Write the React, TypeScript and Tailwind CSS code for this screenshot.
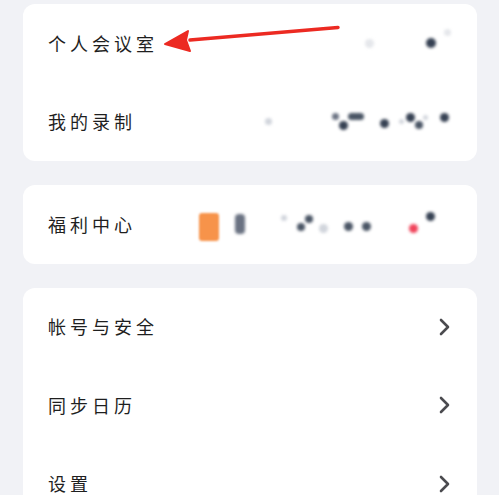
import React from "react";

const font = { fontFamily: '"Noto Sans CJK SC", "Noto Sans", sans-serif' };

function Chevron() {
  return (
    <svg width="14" height="20" viewBox="0 0 14 20" className="shrink-0 -mr-[2px]">
      <polyline points="4,3 11,10 4,17" fill="none" stroke="#4b4b4f" strokeWidth="2.6" strokeLinecap="round" strokeLinejoin="round" />
    </svg>
  );
}

// blurred dot used for the pixelated/obscured values on the right
function Dot({ c = "bg-gray-700", s = "w-[9px] h-[9px]", cls = "" }: { c?: string; s?: string; cls?: string }) {
  return <span className={`inline-block rounded-full blur-[1.5px] ${c} ${s} ${cls}`} />;
}

function Row({ label, right }: { label: string; right?: React.ReactNode }) {
  return (
    <div className="h-[78.5px] flex items-center pl-[25px] pr-[28px]">
      <span className="text-[18px] tracking-[4px] text-[#1f1f1f]" style={font}>
        {label}
      </span>
      <div className="flex-1 flex items-center justify-end">{right}</div>
    </div>
  );
}

export default function App() {
  return (
    <div className="relative w-[499px] h-[495px] overflow-hidden bg-[#f1f2f6] pt-[4px] px-[23px] pr-[22px] flex flex-col gap-[24px]">
      <div className="bg-white rounded-[12px]">
        <Row
          label="个人会议室"
          right={
            <div className="flex items-center">
              <Dot c="bg-gray-200" s="w-[9px] h-[9px]" cls="mr-[52px]" />
              <Dot s="w-[10px] h-[10px]" cls="mr-[8px]" />
              <Dot c="bg-gray-200" s="w-[7px] h-[7px]" cls="-mt-[22px] -mr-[2px]" />
            </div>
          }
        />
        <Row
          label="我的录制"
          right={
            <div className="flex items-center">
              <Dot c="bg-gray-300" s="w-[7px] h-[7px]" cls="mr-[60px]" />
              <Dot c="bg-gray-500" s="w-[7px] h-[7px]" cls="-mt-[10px]" />
              <Dot s="w-[9px] h-[9px]" cls="mt-[8px]" />
              <Dot c="bg-gray-600" s="w-[16px] h-[7px]" cls="-mt-[10px] mr-[16px]" />
              <Dot s="w-[9px] h-[9px]" cls="mt-[4px] mr-[10px]" />
              <Dot c="bg-gray-300" s="w-[5px] h-[5px]" cls="mr-[2px]" />
              <Dot s="w-[9px] h-[9px]" cls="-mt-[8px]" />
              <Dot c="bg-gray-600" s="w-[8px] h-[8px]" cls="mt-[6px]" />
              <Dot c="bg-gray-300" s="w-[5px] h-[5px]" cls="-mt-[8px] mr-[12px]" />
              <Dot s="w-[9px] h-[9px]" cls="-mt-[8px]" />
            </div>
          }
        />
      </div>

      <div className="bg-white rounded-[12px]">
        <Row
          label="福利中心"
          right={
            <div className="flex items-center w-[250px]">
              <span className="inline-block w-[20px] h-[28px] rounded-[3px] bg-[#f7934a] blur-[1px] mt-[6px] mr-[16px]" />
              <span className="inline-block w-[10px] h-[20px] rounded-[4px] bg-gray-500 blur-[1.5px] mr-[36px]" />
              <Dot c="bg-gray-300" s="w-[6px] h-[6px]" cls="-mt-[12px] mr-[10px]" />
              <Dot c="bg-gray-600" s="w-[8px] h-[8px]" cls="mt-[6px]" />
              <Dot c="bg-gray-600" s="w-[8px] h-[8px]" cls="-mt-[10px] mr-[6px]" />
              <Dot c="bg-gray-300" s="w-[9px] h-[9px]" cls="mt-[8px] mr-[16px]" />
              <Dot c="bg-gray-600" s="w-[9px] h-[9px]" cls="mt-[4px] mr-[9px]" />
              <Dot c="bg-gray-600" s="w-[9px] h-[9px]" cls="mt-[4px] mr-[38px]" />
              <Dot c="bg-[#f0435a]" s="w-[9px] h-[9px]" cls="mt-[8px] mr-[8px]" />
              <Dot s="w-[9px] h-[9px]" cls="-mt-[16px]" />
            </div>
          }
        />
      </div>

      <div className="bg-white rounded-[12px] flex-1">
        <Row label="帐号与安全" right={<Chevron />} />
        <Row label="同步日历" right={<Chevron />} />
        <Row label="设置" right={<Chevron />} />
      </div>

      {/* red annotation arrow */}
      <svg className="absolute left-0 top-0 pointer-events-none" width="499" height="495" viewBox="0 0 499 495">
        <path d="M338,27.5 L190,40" stroke="#ec2a22" strokeWidth="3.5" strokeLinecap="round" />
        <path d="M165,44 L188,31 L186,40 L190,51 Z" fill="#ec2a22" stroke="#ec2a22" strokeWidth="2" strokeLinejoin="round" />
      </svg>
    </div>
  );
}
